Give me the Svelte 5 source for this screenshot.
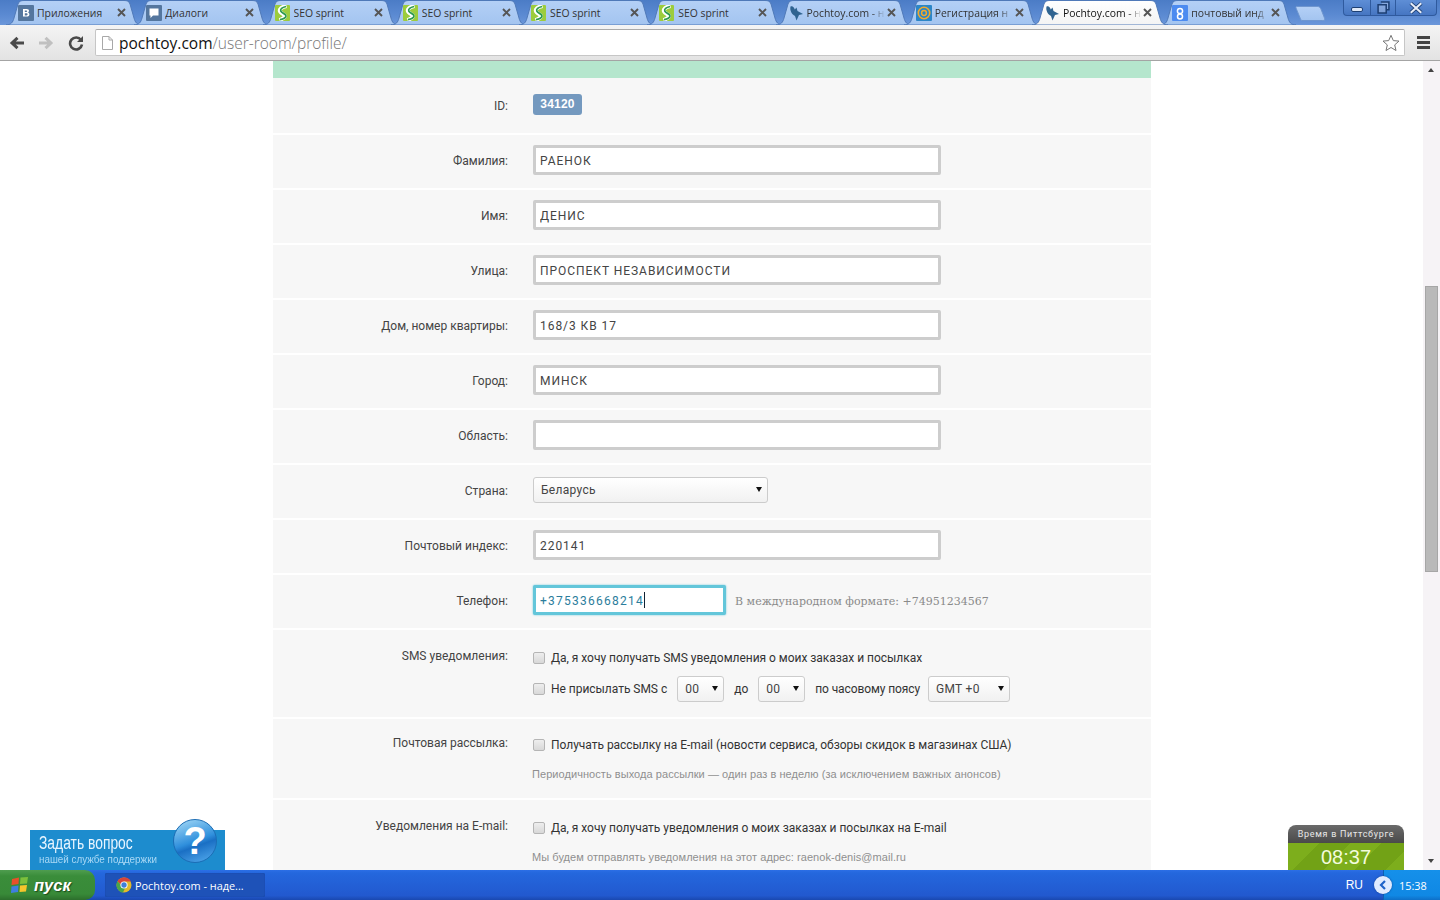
<script>
  const tabs = [
    { icon: 'vk', title: 'Приложения' },
    { icon: 'msg', title: 'Диалоги' },
    { icon: 'seo', title: 'SEO sprint' },
    { icon: 'seo', title: 'SEO sprint' },
    { icon: 'seo', title: 'SEO sprint' },
    { icon: 'seo', title: 'SEO sprint' },
    { icon: 'bird', title: 'Pochtoy.com - н', fade: true },
    { icon: 'at', title: 'Регистрация н', fade: true },
    { icon: 'bird', title: 'Pochtoy.com - н', active: true, fade: true },
    { icon: 'g', title: 'почтовый инд', fade: true }
  ];
  const fields = [
    { label: 'Фамилия:', value: 'РАЕНОК' },
    { label: 'Имя:', value: 'ДЕНИС' },
    { label: 'Улица:', value: 'ПРОСПЕКТ НЕЗАВИСИМОСТИ' },
    { label: 'Дом, номер квартиры:', value: '168/3 КВ 17' },
    { label: 'Город:', value: 'МИНСК' },
    { label: 'Область:', value: '' }
  ];
</script>

<div class="app">
  <svg class="defs" width="0" height="0" aria-hidden="true">
    <defs>
      <linearGradient id="tabOff" x1="0" y1="0" x2="0" y2="1">
        <stop offset="0" stop-color="#b4d0f6" />
        <stop offset="1" stop-color="#a3c4f0" />
      </linearGradient>
      <linearGradient id="tabOn" x1="0" y1="0" x2="0" y2="1">
        <stop offset="0" stop-color="#ffffff" />
        <stop offset="1" stop-color="#f3f3f3" />
      </linearGradient>
    </defs>
  </svg>

  <header class="tabstrip">
    {#each tabs as tab}
      <div class="tab" class:active={tab.active}>
        <svg class="tabshape" viewBox="0 0 136 25" width="136" height="25" aria-hidden="true">
          <path
            d="M0 25C5 25 7 22 8 18L12 4C13 1 15 .5 18 .5L118 .5C121 .5 123 1 124 4L128 18C129 22 131 25 136 25Z"
            fill={tab.active ? 'url(#tabOn)' : 'url(#tabOff)'}
            stroke="#4f79b8"
          />
        </svg>
        <svg class="fav" viewBox="0 0 16 16" width="16" height="16" aria-hidden="true">
          {#if tab.icon === 'vk'}
            <rect width="16" height="16" rx="1" fill="#54769e" />
            <path d="M5 4h3.700c1.500 0 2.300.8 2.300 1.800 0 .8-.4 1.300-1 1.600.8.2 1.400.9 1.400 1.800 0 1.400-1 2.300-2.600 2.300H5ZM6.800 5.400v1.500h1.500c.6 0 .9-.3.9-.75s-.3-.75-.9-.75ZM6.800 8.200v2.300h1.700c.7 0 1.100-.4 1.100-1.150S9.200 8.200 8.500 8.200Z" fill="#fff" />
          {:else if tab.icon === 'msg'}
            <rect width="16" height="16" rx="1" fill="#54769e" />
            <path d="M3.500 3.500h9v7h-5.500l-2.500 2.500v-2.500h-1Z" fill="#fff" />
          {:else if tab.icon === 'seo'}
            <rect width="15" height="16" rx="1" fill="#9ccc3c" />
            <path d="M11.500 1C6.500 2 4 4 5 6.500 6 9 10 9 10 11c0 1.500-2 2.700-5.500 4" fill="none" stroke="#fff" stroke-width="4" />
            <path d="M11 1.500C7 2.500 5 4.200 5.800 6.200 6.800 8.500 11 8.500 11 11c0 1.800-2.500 3-6 3.700" fill="none" stroke="#2e9a4e" stroke-width="1.700" />
          {:else if tab.icon === 'bird'}
            <path d="M2.500 1.500C4.500.500 6 2 6.800 4.500L8.500 2.500 9.500 6 15 9 11 10 8.500 15.500 7 11C4 9.500 1.500 5.500 2.500 1.500Z" fill="#2f6390" />
          {:else if tab.icon === 'at'}
            <rect width="16" height="16" rx="1" fill="#2c86c7" />
            <circle cx="8" cy="8" r="5.700" fill="none" stroke="#f2a92c" stroke-width="1.600" />
            <circle cx="8" cy="8" r="2.400" fill="none" stroke="#f2a92c" stroke-width="1.500" />
          {:else}
            <rect width="16" height="16" rx="1" fill="#4c8bf0" />
            <circle cx="8" cy="6" r="2.600" fill="none" stroke="#fff" stroke-width="1.500" />
            <circle cx="8" cy="11.500" r="2.500" fill="none" stroke="#fff" stroke-width="1.500" />
          {/if}
        </svg>
        <span class="tabtitle" class:fade={tab.fade}>{tab.title}</span>
        <svg class="tabclose" viewBox="0 0 9 9" width="9" height="9" aria-hidden="true">
          <path d="M1 1 8 8M8 1 1 8" stroke="#555" stroke-width="1.900" />
        </svg>
      </div>
    {/each}
    <svg class="newtab" viewBox="0 0 32 16" width="31" height="15" aria-hidden="true">
      <path d="M1 .5H23C25 .5 26 1 27 3L31 13C31.500 15 31 15.500 29 15.500H8C6 15.500 5.500 15 5 13L.5 2C.3 1 .5.500 1 .5Z" fill="url(#tabOff)" stroke="#6d94cd" />
    </svg>
    <div class="winbtns">
      <span class="winbtn min"><i></i></span>
      <span class="winbtn rest"><svg viewBox="0 0 12 12" width="13" height="13" aria-hidden="true"><path d="M3.500 1h7.500v7H8.500M1 3.500h7.500v7.500H1Z" fill="#dfe9f8" fill-opacity=".35" stroke="#1d3f73" stroke-width="1.400" /></svg></span>
      <span class="winbtn close"><svg viewBox="0 0 12 10" width="14" height="12" aria-hidden="true"><path d="M1.500 1 10.500 9M10.500 1 1.500 9" stroke="#1d3f73" stroke-width="3.200" /><path d="M1.500 1 10.500 9M10.500 1 1.500 9" stroke="#e8eef8" stroke-width="1.800" /></svg></span>
    </div>
  </header>

  <nav class="toolbar">
    <svg viewBox="0 0 18 16" width="18" height="16" aria-hidden="true" class="navicon">
      <path d="M16 8H5M9.500 2.800 4 8l5.500 5.200" fill="none" stroke="#4a4a4a" stroke-width="3" />
    </svg>
    <svg viewBox="0 0 18 16" width="18" height="16" aria-hidden="true" class="navicon">
      <path d="M2 8H13M8.500 2.800 14 8l-5.500 5.200" fill="none" stroke="#c0c0c0" stroke-width="3" />
    </svg>
    <svg viewBox="0 0 16 16" width="16" height="16" aria-hidden="true" class="navicon">
      <path d="M13 5A6 6 0 1 0 14 9.500" fill="none" stroke="#4a4a4a" stroke-width="2.600" />
      <path d="M15 1v6H9Z" fill="#4a4a4a" />
    </svg>
    <div class="omnibox">
      <svg viewBox="0 0 11 14" width="11" height="14" aria-hidden="true">
        <path d="M.5.500H7L10.500 4v9.500H.5ZM7 .5V4h3.500" fill="#fff" stroke="#a8a8a8" />
      </svg>
      <span class="url"><b>pochtoy.com</b><span>/user-room/profile/</span></span>
      <svg class="star" viewBox="0 0 18 18" width="18" height="18" aria-hidden="true">
        <path d="M9 1.300 11.300 6.600 17 7.100 12.700 10.900 14 16.500 9 13.500 4 16.500 5.300 10.900 1 7.100 6.700 6.600Z" fill="#fff" stroke="#777" />
      </svg>
    </div>
    <div class="menu"><i></i><i></i><i></i></div>
  </nav>

  <div class="viewport">
    <main class="page">
      <section class="panel">
        <div class="greenbar"></div>

        <div class="row">
          <div class="label">ID:</div>
          <div class="value"><span class="badge">34120</span></div>
        </div>

        {#each fields as f}
          <div class="row">
            <div class="label">{f.label}</div>
            <div class="value"><input class="field" value={f.value} aria-label={f.label} /></div>
          </div>
        {/each}

        <div class="row">
          <div class="label">Страна:</div>
          <div class="value">
            <span class="sel wide"><select aria-label="Страна"><option>Беларусь</option></select></span>
          </div>
        </div>

        <div class="row">
          <div class="label">Почтовый индекс:</div>
          <div class="value"><input class="field" value="220141" aria-label="Почтовый индекс" /></div>
        </div>

        <div class="row">
          <div class="label">Телефон:</div>
          <div class="value phone-line">
            <div class="field phone">+375336668214<i class="caret"></i></div>
            <span class="hint">В международном формате: +74951234567</span>
          </div>
        </div>

        <div class="row tall sms">
          <div class="label">SMS уведомления:</div>
          <div class="value stack">
            <label class="check"><span class="box"></span>Да, я хочу получать SMS уведомления о моих заказах и посылках</label>
            <div class="check line2">
              <span class="box"></span><span>Не присылать SMS с</span>
              <span class="sel tiny first"><select aria-label="с"><option>00</option></select></span>
              <span class="mid">до</span>
              <span class="sel tiny"><select aria-label="до"><option>00</option></select></span>
              <span class="mid2">по часовому поясу</span>
              <span class="sel gmt"><select aria-label="Часовой пояс"><option>GMT +0</option></select></span>
            </div>
          </div>
        </div>

        <div class="row tall mail">
          <div class="label">Почтовая рассылка:</div>
          <div class="value stack">
            <label class="check"><span class="box"></span>Получать рассылку на E-mail (новости сервиса, обзоры скидок в магазинах США)</label>
            <p class="note">Периодичность выхода рассылки — один раз в неделю (за исключением важных анонсов)</p>
          </div>
        </div>

        <div class="row tall mail notify">
          <div class="label">Уведомления на E-mail:</div>
          <div class="value stack">
            <label class="check"><span class="box"></span>Да, я хочу получать уведомления о моих заказах и посылках на E-mail</label>
            <p class="note">Мы будем отправлять уведомления на этот адрес: raenok-denis@mail.ru</p>
          </div>
        </div>
      </section>

      <aside class="help">
        <div class="helptext">
          <strong>Задать вопрос</strong>
          <span>нашей службе поддержки</span>
        </div>
        <div class="helpq">?</div>
      </aside>

      <aside class="clock">
        <div class="clockhead">Время в Питтсбурге</div>
        <div class="clockbody">08:37</div>
      </aside>
    </main>

    <div class="scrollbar">
      <i class="up"></i>
      <div class="thumb"></div>
      <i class="down"></i>
    </div>
  </div>

  <footer class="taskbar">
    <div class="start">
      <svg viewBox="0 0 20 18" width="20" height="18" aria-hidden="true">
        <path d="M2 3 9 1.500 8.500 8 1.500 9Z" fill="#e8502a" />
        <path d="M10.500 1.500 18 1 17 7.500 10 8Z" fill="#7cc03c" />
        <path d="M1.500 10.500 8.500 9.500 8 16 1 17Z" fill="#3f7fe0" />
        <path d="M10 9.500 17 9 16 15.500 9.500 16Z" fill="#f6c52c" />
      </svg>
      <span>пуск</span>
    </div>
    <div class="task">
      <svg viewBox="0 0 16 16" width="16" height="16" aria-hidden="true">
        <circle cx="8" cy="8" r="7.500" fill="#e0b92c" />
        <path d="M8 .5A7.500 7.500 0 0 0 1.500 4.200L5 8 8 4.500H15A7.500 7.500 0 0 0 8 .5Z" fill="#d9443a" />
        <path d="M1.500 4.200A7.500 7.500 0 0 0 7 15.500L9 11 5 8Z" fill="#4aa54a" />
        <circle cx="8" cy="8" r="3.600" fill="#fff" />
        <circle cx="8" cy="8" r="2.700" fill="#3f7fd8" />
      </svg>
      <span>Pochtoy.com - наде...</span>
    </div>
    <div class="lang">RU</div>
    <div class="tray">
      <span class="chev">
        <svg viewBox="0 0 8 10" width="8" height="10" aria-hidden="true"><path d="M6 1 2 5 6 9" fill="none" stroke="#1f63c9" stroke-width="2.200" /></svg>
      </span>
      <span class="time">15:38</span>
    </div>
  </footer>
</div>

<style>
  :global(body) {
    margin: 0;
    background: #fff;
  }
  .app {
    width: 1440px;
    height: 900px;
    display: flex;
    flex-direction: column;
    overflow: hidden;
    font-family: "Liberation Sans", Arial, sans-serif;
  }
  .defs {
    position: absolute;
  }

  /* Tabs */
  .tabstrip {
    height: 25px;
    flex: none;
    display: flex;
    padding-left: 6px;
    background: linear-gradient(#4b7cc6, #5b8ad2 60%, #6b97da);
    box-sizing: border-box;
    position: relative;
  }
  .tab {
    position: relative;
    flex: none;
    width: 136px;
    height: 25px;
    margin-right: -7.75px;
    padding-left: 12px;
    box-sizing: border-box;
    display: flex;
    align-items: center;
    font: 10.4px "Open Sans", sans-serif;
    color: #333;
  }
  .tab.active {
    z-index: 2;
    color: #111;
  }
  .tabshape {
    position: absolute;
    left: 0;
    top: 0;
  }
  .fav,
  .tabtitle,
  .tabclose {
    position: relative;
  }
  .fav {
    flex: none;
  }
  .tabtitle {
    margin-left: 3px;
    width: 80px;
    white-space: nowrap;
    overflow: hidden;
  }
  .tabtitle.fade {
    mask-image: linear-gradient(90deg, #000 80%, transparent 98%);
  }
  .tabclose {
    flex: none;
    margin-left: 0;
  }
  .newtab {
    flex: none;
    margin: 6px 0 0 6.5px;
    position: relative;
  }
  .winbtns {
    position: absolute;
    left: 1343px;
    top: 0;
    width: 94px;
    height: 16px;
    display: flex;
    background: linear-gradient(#5e8ed6, #4676c2);
    border: 1px solid #2f5a9e;
    border-top: 0;
    border-radius: 0 0 4px 4px;
    box-sizing: border-box;
  }
  .winbtn {
    display: flex;
    align-items: center;
    justify-content: center;
    height: 100%;
  }
  .winbtn + .winbtn {
    border-left: 1px solid #2f5a9e;
  }
  .min {
    width: 26px;
  }
  .min i {
    width: 10px;
    height: 3px;
    border: 1px solid #1d3f73;
    background: #dfe9f8;
    border-radius: 2px;
    margin-top: 3px;
  }
  .rest {
    width: 24px;
  }
  .close {
    flex: 1;
  }

  /* Toolbar */
  .toolbar {
    height: 36px;
    flex: none;
    box-sizing: border-box;
    display: flex;
    align-items: center;
    padding: 0 7px 0 8px;
    background: linear-gradient(#f4f4f4, #e3e3e3);
    border-bottom: 1px solid #a4a4a4;
  }
  .navicon {
    flex: none;
    margin-right: 11px;
  }
  .navicon + .navicon + .navicon {
    margin-right: 11px;
    margin-left: 2px;
  }
  .omnibox {
    flex: none;
    width: 1310px;
    height: 27px;
    box-sizing: border-box;
    display: flex;
    align-items: center;
    background: #fff;
    border: 1px solid #c6c6c6;
    border-top-color: #aaa;
    border-radius: 2px;
    padding: 0 4px 0 6px;
  }
  .url {
    flex: 1;
    margin-left: 6px;
    font: 300 15.5px "Open Sans", sans-serif;
    color: #777;
  }
  .url b {
    font-weight: 400;
    color: #111;
  }
  .menu {
    margin-left: 12px;
    width: 13px;
    display: flex;
    flex-direction: column;
    gap: 2px;
  }
  .menu i {
    height: 3px;
    background: #444;
  }

  /* Page */
  .viewport {
    flex: 1;
    min-height: 0;
    display: flex;
  }
  .page {
    flex: 1;
    position: relative;
    overflow: hidden;
    background: #fff;
    padding-left: 273px;
  }
  .panel {
    width: 878px;
    background: #f7f7f7;
    font: 12px Roboto, sans-serif;
    color: #444;
  }
  .greenbar {
    height: 17px;
    background: #b5e6cd;
  }
  .row {
    height: 55px;
    box-sizing: border-box;
    display: flex;
    align-items: center;
    border-top: 2px solid #fff;
    padding-bottom: 3px;
  }
  .greenbar + .row {
    border-top-color: #f7f7f7;
  }
  .label {
    width: 235px;
    flex: none;
    margin-top: 2px;
    text-align: right;
  }
  .value {
    margin-left: 25px;
    display: flex;
    align-items: center;
  }
  .badge {
    display: block;
    width: 49px;
    height: 21px;
    text-align: center;
    margin-top: -1px;
    background: #7499bf;
    border-radius: 3px;
    color: #fff;
    font: bold 12px/20px "Liberation Sans", sans-serif;
    letter-spacing: .2px;
  }
  .field {
    display: block;
    width: 408px;
    height: 30px;
    box-sizing: border-box;
    border: 3px solid #cdcdcd;
    border-radius: 2px;
    background: #fff;
    padding: 2px 4px 0;
    margin: 0;
    outline: none;
    font: 12px/22px Roboto, sans-serif;
    letter-spacing: .95px;
    color: #444;
  }
  .phone {
    width: 193px;
    border-color: #63c6da;
    box-shadow: 0 0 2px #63c6da;
    color: #2b7d9c;
    letter-spacing: 1.25px;
    white-space: nowrap;
  }
  .caret {
    display: inline-block;
    width: 1px;
    height: 16px;
    vertical-align: -3px;
    background: #123;
  }
  .hint {
    margin: 2px 0 0 9px;
    font: 11px "DejaVu Serif", serif;
    color: #8a8a8a;
  }
  .sel {
    position: relative;
    display: inline-block;
  }
  .sel::after {
    content: "";
    position: absolute;
    right: 6px;
    top: 10px;
    border: 3.500px solid transparent;
    border-top: 5px solid #111;
    border-bottom: 0;
    pointer-events: none;
  }
  .sel select {
    appearance: none;
    display: block;
    width: 100%;
    height: 100%;
    box-sizing: border-box;
    border: 1px solid #ccc;
    border-radius: 3px;
    background: linear-gradient(#fff, #f1f1f1);
    padding: 0 0 0 7px;
    font: 12px Roboto, sans-serif;
    letter-spacing: .3px;
    color: #444;
  }
  .wide {
    width: 235px;
    height: 26px;
  }
  .tiny {
    width: 47px;
    height: 26px;
  }
  .gmt {
    width: 82px;
    height: 26px;
  }
  .row.tall {
    align-items: flex-start;
    padding-bottom: 0;
  }
  .sms {
    height: 89px;
    padding-top: 19px;
  }
  .mail {
    height: 81px;
    padding-top: 17px;
  }
  .notify {
    padding-top: 19px;
  }
  .tall .label {
    margin-top: 0;
    line-height: 14px;
  }
  .stack {
    flex-direction: column;
    align-items: flex-start;
  }
  .check {
    display: flex;
    align-items: center;
    height: 14px;
    margin-top: 2px;
    white-space: nowrap;
    letter-spacing: -.03px;
    color: #333;
  }
  .box {
    flex: none;
    width: 12px;
    height: 12px;
    box-sizing: border-box;
    margin-right: 6px;
    border: 1px solid #b5b5b5;
    border-radius: 2px;
    background: linear-gradient(#eee, #d8d8d8);
  }
  .line2 {
    height: 26px;
    margin-top: 11px;
  }
  .line2 .sel {
    margin-left: 9px;
  }
  .line2 .first {
    margin-left: 10px;
  }
  .mid {
    margin-left: 10px;
    margin-right: 1px;
  }
  .mid + .sel {
    margin-left: 9px;
  }
  .mid2 {
    margin-left: 10px;
    letter-spacing: -.1px;
  }
  .mid2 + .sel {
    margin-left: 8px;
  }
  .note {
    margin: 16px 0 0 -1px;
    font: 11px "Liberation Sans", sans-serif;
    letter-spacing: .06px;
    color: #8f8f8f;
    line-height: 13px;
  }

  /* Overlays */
  .help {
    position: absolute;
    left: 30px;
    bottom: 0;
    width: 195px;
    height: 40px;
    background: #1d8cce;
    color: #fff;
  }
  .helptext {
    padding: 3px 0 0 9px;
    display: flex;
    flex-direction: column;
  }
  .helptext strong {
    font: 400 18px/20px "Liberation Sans", sans-serif;
    color: #e8f5ff;
    white-space: nowrap;
    transform: scaleX(.77);
    transform-origin: left;
  }
  .helptext span {
    font: 11.5px/12px "Liberation Sans", sans-serif;
    color: #a9d8f5;
    white-space: nowrap;
    transform: scaleX(.855);
    transform-origin: left;
  }
  .helpq {
    position: absolute;
    left: 143px;
    top: -11px;
    width: 44px;
    height: 44px;
    border-radius: 50%;
    background: linear-gradient(160deg, #a8dcf8, #2f8fdc 50%, #1a6fc4 60%, #56aef0);
    border: 1px solid #1b6db5;
    box-sizing: border-box;
    text-align: center;
    font: bold 38px/42px "Liberation Sans", sans-serif;
    color: #fff;
  }
  .clock {
    position: absolute;
    left: 1288px;
    bottom: 0;
    width: 116px;
    height: 45px;
    border-radius: 8px 8px 0 0;
    overflow: hidden;
    text-align: center;
  }
  .clockhead {
    height: 18px;
    background: linear-gradient(#6a6a6a, #4a4a4a);
    color: #e8e8e8;
    font: 9px/19px Roboto, sans-serif;
    letter-spacing: .7px;
  }
  .clockbody {
    height: 27px;
    background: repeating-linear-gradient(135deg, #7dae1c 0 22px, #72a216 22px 44px);
    color: #f2fbdc;
    font: 20px/28px "Liberation Sans", sans-serif;
  }

  /* Scrollbar */
  .scrollbar {
    flex: none;
    width: 17px;
    position: relative;
    background: #f6f3f6;
  }
  .thumb {
    position: absolute;
    left: 2px;
    top: 225px;
    width: 13px;
    height: 286px;
    box-sizing: border-box;
    background: #b9b9b9;
    border: 1px solid #a6a6a6;
  }
  .up,
  .down {
    position: absolute;
    left: 5px;
    border: 3.500px solid transparent;
  }
  .up {
    top: 7px;
    border-top: 0;
    border-bottom: 4px solid #444;
  }
  .down {
    bottom: 7px;
    border-bottom: 0;
    border-top: 4px solid #444;
  }

  /* Taskbar */
  .taskbar {
    height: 30px;
    flex: none;
    display: flex;
    align-items: center;
    background: linear-gradient(#2c6fe6 0, #2467dd 10%, #2259cf 85%, #1a48b0);
    color: #fff;
    font: 10.9px "Open Sans", sans-serif;
  }
  .start {
    width: 95px;
    height: 30px;
    flex: none;
    box-sizing: border-box;
    display: flex;
    align-items: center;
    gap: 4px;
    padding-left: 10px;
    background: linear-gradient(#4f9d4f, #3a8d3a 20%, #388a38 80%, #2c6e2c);
    border-radius: 0 10px 10px 0;
  }
  .start span {
    font: italic bold 16.5px "Liberation Sans", sans-serif;
    text-shadow: 1px 1px 1px #1c4a1c;
  }
  .task {
    width: 160px;
    height: 24px;
    flex: none;
    margin-left: 10px;
    box-sizing: border-box;
    display: flex;
    align-items: center;
    gap: 3px;
    padding-left: 11px;
    background: #1e52b8;
    border-radius: 2px;
    box-shadow: inset 0 0 1px #113a8c;
  }
  .lang {
    margin-left: auto;
    margin-right: 20px;
    font-family: "Liberation Sans", sans-serif;
    font-size: 12px;
  }
  .tray {
    width: 57px;
    height: 30px;
    flex: none;
    box-sizing: border-box;
    display: flex;
    align-items: center;
    gap: 7px;
    background: linear-gradient(#1590ea, #1088e4 85%, #0e6fc8);
    border-left: 1px solid #0e5fb0;
  }
  .chev {
    flex: none;
    width: 18px;
    height: 18px;
    margin-left: -10px;
    border-radius: 50%;
    background: #dfeaff;
    display: flex;
    align-items: center;
    justify-content: center;
    box-shadow: 0 0 2px #0c3f94;
  }
</style>
